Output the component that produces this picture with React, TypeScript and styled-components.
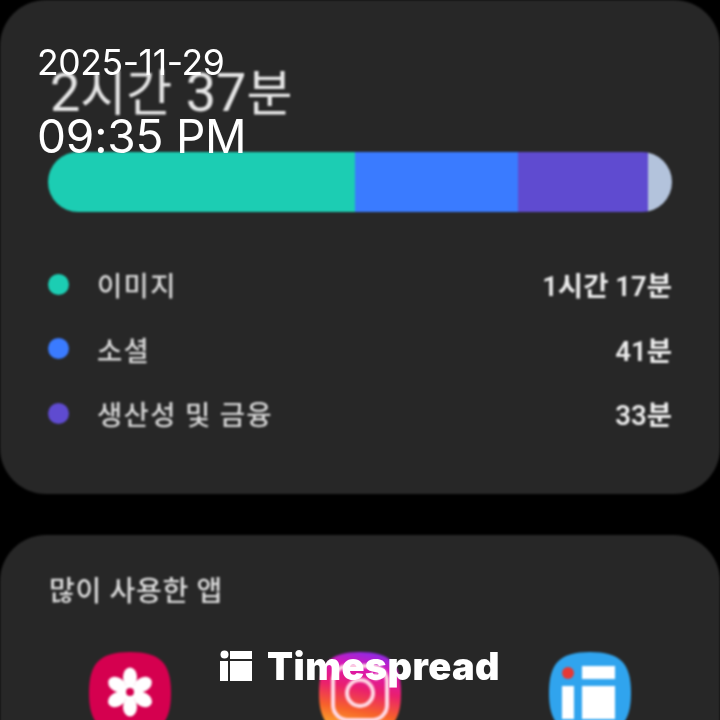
import React from 'react';
import styled, { createGlobalStyle } from 'styled-components';

const Global = createGlobalStyle`
  html, body { margin: 0; padding: 0; background: #000; }
  #root { width: 720px; height: 720px; }
`;

const Page = styled.div`
  position: relative;
  width: 720px;
  height: 720px;
  overflow: hidden;
  background: #000;
  font-family: "Roboto", "Noto Sans CJK KR", sans-serif;
`;

const Blurred = styled.div`
  display: flex;
  flex-direction: column;
  gap: 41px;
  filter: blur(0.8px);
`;

const Card = styled.section`
  background: #272727;
  border-radius: 46px;
  box-sizing: border-box;
`;

const SummaryCard = styled(Card)`
  height: 494px;
  padding: 58px 48px 0;
`;

const TopAppsCard = styled(Card)`
  height: 300px;
  padding: 38px 15px 0;
`;

const Total = styled.div`
  height: 94px;
  padding-left: 2px;
  color: #e6e6e6;
  font-size: 54px;
  line-height: 70px;
  font-weight: 400;
  white-space: nowrap;
`;

const TotalUnit = styled.span`
  font-size: 50px;
`;

const Bar = styled.div`
  display: flex;
  height: 60px;
  border-radius: 30px;
  overflow: hidden;
`;

const Segment = styled.div<{ $w: number; $c: string }>`
  width: ${p => p.$w}px;
  background: ${p => p.$c};
`;

const Legend = styled.ul`
  list-style: none;
  margin: 52px 0 0;
  padding: 0;
  display: flex;
  flex-direction: column;
  gap: 24.5px;
`;

const LegendRow = styled.li`
  display: flex;
  align-items: center;
  height: 40px;
`;

const Dot = styled.span<{ $c: string }>`
  width: 21px;
  height: 21px;
  border-radius: 50%;
  background: ${p => p.$c};
  margin-right: 28px;
`;

const LegendLabel = styled.span`
  flex: 1;
  color: #d6d6d6;
  font-size: 27.5px;
  letter-spacing: 1.3px;
  font-weight: 500;
`;

const LegendValue = styled.span`
  color: #ececec;
  font-size: 27.5px;
  font-weight: 600;
`;

const SectionTitle = styled.h2`
  margin: 0 0 0 34px;
  color: #dcdcdc;
  font-size: 28px;
  line-height: 38px;
  font-weight: 500;
  letter-spacing: 0.7px;
`;

const AppGrid = styled.div`
  display: grid;
  grid-template-columns: repeat(3, 230px);
  margin-top: 40px;
  justify-items: center;
`;

const AppIcon = styled.svg`
  width: 84px;
  height: 84px;
  display: block;
`;

const Stamp = styled.div`
  position: absolute;
  left: 37px;
  top: 41px;
  color: #fff;
  font-family: "Inter", "Roboto", sans-serif;
  font-weight: 400;
`;

const StampDate = styled.div`
  font-size: 35.5px;
  line-height: 44px;
  letter-spacing: -0.4px;
`;

const StampTime = styled.div`
  font-size: 46px;
  line-height: 54px;
  margin-top: 24px;
  letter-spacing: -0.2px;
`;

const Brand = styled.div`
  position: absolute;
  left: 220px;
  top: 644px;
  display: flex;
  align-items: center;
  gap: 15px;
  color: #fff;
  font-family: "Inter", sans-serif;
  font-size: 38px;
  line-height: 44px;
  font-weight: 900;
  letter-spacing: 0.4px;
`;

const BrandMark = styled.svg`
  width: 32px;
  height: 32px;
  display: block;
`;

const squircle = 'M42 1C72 1 83 12 83 42C83 72 72 83 42 83C12 83 1 72 1 42C1 12 12 1 42 1Z';

const GalleryIcon = () => (
  <AppIcon viewBox="0 0 84 84">
    <path d={squircle} fill="#d5004f" />
    <g fill="#fff">
      {[0, 60, 120, 180, 240, 300].map(a => (
        <ellipse key={a} cx="42" cy="26" rx="7" ry="9.5" transform={`rotate(${a} 42 41)`} />
      ))}
      <circle cx="42" cy="41" r="9" />
    </g>
    <circle cx="42" cy="41" r="4" fill="#d5004f" />
  </AppIcon>
);

const InstagramIcon = () => (
  <AppIcon viewBox="0 0 84 84">
    <defs>
      <linearGradient id="ig" x1="0.4" y1="1" x2="0.6" y2="0">
        <stop offset="0" stopColor="#fdb92e" />
        <stop offset="0.28" stopColor="#f7622a" />
        <stop offset="0.55" stopColor="#ea1f6e" />
        <stop offset="0.8" stopColor="#d917b4" />
        <stop offset="1" stopColor="#8f2ae6" />
      </linearGradient>
    </defs>
    <path d={squircle} fill="url(#ig)" />
    <g stroke="#ffd8e4" strokeWidth="4" fill="none">
      <rect x="15" y="15" width="54" height="54" rx="15" />
      <circle cx="42" cy="42" r="13" />
    </g>
    <circle cx="58" cy="26" r="3.2" fill="#fff" />
  </AppIcon>
);

const TimespreadIcon = () => (
  <AppIcon viewBox="0 0 84 84">
    <path d={squircle} fill="#30a4ee" />
    <circle cx="20" cy="22" r="6" fill="#e53935" />
    <rect x="34" y="15" width="33" height="13" fill="#fff" />
    <rect x="14" y="35" width="12" height="33" fill="#fff" />
    <rect x="34" y="35" width="33" height="33" fill="#fff" />
  </AppIcon>
);

export default function App() {
  return (
    <Page>
      <Global />
      <Blurred>
        <SummaryCard>
          <Total>2<TotalUnit>시간</TotalUnit> 37<TotalUnit>분</TotalUnit></Total>
          <Bar>
            <Segment $w={307} $c="#1ccdb3" />
            <Segment $w={163} $c="#3a7bff" />
            <Segment $w={130} $c="#5f4bd0" />
            <Segment $w={24} $c="#b3c3dc" />
          </Bar>
          <Legend>
            <LegendRow>
              <Dot $c="#1ccdb3" />
              <LegendLabel>이미지</LegendLabel>
              <LegendValue>1시간 17분</LegendValue>
            </LegendRow>
            <LegendRow>
              <Dot $c="#3a7bff" />
              <LegendLabel>소셜</LegendLabel>
              <LegendValue>41분</LegendValue>
            </LegendRow>
            <LegendRow>
              <Dot $c="#5f4bd0" />
              <LegendLabel>생산성 및 금융</LegendLabel>
              <LegendValue>33분</LegendValue>
            </LegendRow>
          </Legend>
        </SummaryCard>
        <TopAppsCard>
          <SectionTitle>많이 사용한 앱</SectionTitle>
          <AppGrid>
            <GalleryIcon />
            <InstagramIcon />
            <TimespreadIcon />
          </AppGrid>
        </TopAppsCard>
      </Blurred>
      <Stamp>
        <StampDate>2025-11-29</StampDate>
        <StampTime>09:35 PM</StampTime>
      </Stamp>
      <Brand>
        <BrandMark viewBox="0 0 32 32">
          <circle cx="4.5" cy="4.5" r="4" fill="#fff" />
          <rect x="10" y="1" width="22" height="8" fill="#fff" />
          <rect x="0" y="11" width="8" height="20" fill="#fff" />
          <rect x="10" y="11" width="22" height="20" fill="#fff" />
        </BrandMark>
        Timespread
      </Brand>
    </Page>
  );
}
